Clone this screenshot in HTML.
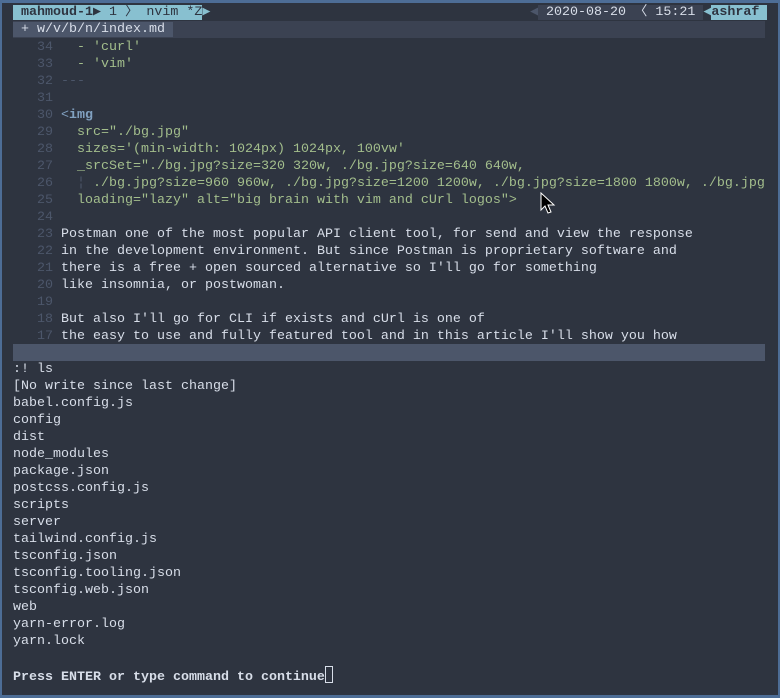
<!DOCTYPE html>
<html><head><meta charset="utf-8"><style>
html,body{margin:0;padding:0}
body{width:780px;height:698px;background:#4d6d96;position:relative;overflow:hidden;font-family:"Liberation Mono","DejaVu Sans Mono",monospace;font-size:13.33px;color:#d8dee9}
#t{position:absolute;left:2px;top:3px;width:776px;height:692px;background:#2e3440}
.r{position:absolute;left:13px;height:17px;line-height:17px;white-space:pre;width:752px}
.n{color:#4c566a}
.tag{color:#81a1c1}
.s{color:#a3be8c}
.b{font-weight:bold}
</style></head><body><div id="t"></div>
<div class="r" style="top:4px"><span class="b" style="color:#2e3440;background:#88c0d0;padding-left:8px">mahmoud-1</span><span style="color:#2e3440;background:#88c0d0">▶ 1 〉 nvim *Z</span><span style="color:#88c0d0">▶</span></div>
<div style="position:absolute;top:4px;left:530px;height:17px;line-height:17px;white-space:pre;color:#d8dee9"><span style="color:#4c566a">◀</span><span style="background:#3b4252"> 2020-08-20 〈 15:21 </span><span style="color:#88c0d0">◀</span><span class="b" style="background:#88c0d0;color:#2e3440">ashraf </span></div>
<div class="r" style="top:21px;background:#3b4252"><span style="background:#4c566a;color:#d8dee9;padding:0 0 0 8px">+ w/v/b/n/index.md </span></div>
<div class="r" style="top:39px"><span class="n">   34 </span><span class="s">  - 'curl'</span></div>
<div class="r" style="top:56px"><span class="n">   33 </span><span class="s">  - 'vim'</span></div>
<div class="r" style="top:73px"><span class="n">   32 ---</span></div>
<div class="r" style="top:90px"><span class="n">   31 </span></div>
<div class="r" style="top:107px"><span class="n">   30 </span><span class="tag">&lt;<b>img</b></span></div>
<div class="r" style="top:124px"><span class="n">   29 </span><span class="s">  src="./bg.jpg"</span></div>
<div class="r" style="top:141px"><span class="n">   28 </span><span class="s">  sizes='(min-width: 1024px) 1024px, 100vw'</span></div>
<div class="r" style="top:158px"><span class="n">   27 </span><span class="s">  _srcSet="./bg.jpg?size=320 320w, ./bg.jpg?size=640 640w,</span></div>
<div class="r" style="top:175px"><span class="n">   26 </span><span class="s">  <span class="n">¦</span> ./bg.jpg?size=960 960w, ./bg.jpg?size=1200 1200w, ./bg.jpg?size=1800 1800w, ./bg.jpg</span></div>
<div class="r" style="top:192px"><span class="n">   25 </span><span class="s">  loading="lazy" alt="big brain with vim and cUrl logos"&gt;</span></div>
<div class="r" style="top:209px"><span class="n">   24 </span></div>
<div class="r" style="top:226px"><span class="n">   23 </span>Postman one of the most popular API client tool, for send and view the response</div>
<div class="r" style="top:243px"><span class="n">   22 </span>in the development environment. But since Postman is proprietary software and</div>
<div class="r" style="top:260px"><span class="n">   21 </span>there is a free + open sourced alternative so I'll go for something</div>
<div class="r" style="top:277px"><span class="n">   20 </span>like insomnia, or postwoman.</div>
<div class="r" style="top:294px"><span class="n">   19 </span></div>
<div class="r" style="top:311px"><span class="n">   18 </span>But also I'll go for CLI if exists and cUrl is one of</div>
<div class="r" style="top:328px"><span class="n">   17 </span>the easy to use and fully featured tool and in this article I'll show you how</div>
<div class="r" style="top:344px;background:#4c566a"></div>
<div class="r" style="top:361px">:! ls</div>
<div class="r" style="top:378px">[No write since last change]</div>
<div class="r" style="top:395px">babel.config.js</div>
<div class="r" style="top:412px">config</div>
<div class="r" style="top:429px">dist</div>
<div class="r" style="top:446px">node_modules</div>
<div class="r" style="top:463px">package.json</div>
<div class="r" style="top:480px">postcss.config.js</div>
<div class="r" style="top:497px">scripts</div>
<div class="r" style="top:514px">server</div>
<div class="r" style="top:531px">tailwind.config.js</div>
<div class="r" style="top:548px">tsconfig.json</div>
<div class="r" style="top:565px">tsconfig.tooling.json</div>
<div class="r" style="top:582px">tsconfig.web.json</div>
<div class="r" style="top:599px">web</div>
<div class="r" style="top:616px">yarn-error.log</div>
<div class="r" style="top:633px">yarn.lock</div>
<div class="r b" style="top:666px">Press ENTER or type command to continue<span style="display:inline-block;width:6px;height:15px;border:1px solid #d8dee9;vertical-align:-3px"></span></div>
<svg style="position:absolute;left:540px;top:192px" width="16" height="22" viewBox="0 0 16 22"><path d="M1 1 L1 18 L5 14 L8 21 L11 20 L8 13 L14 13 Z" fill="#000" stroke="#fff" stroke-width="1"/></svg>
</body></html>
